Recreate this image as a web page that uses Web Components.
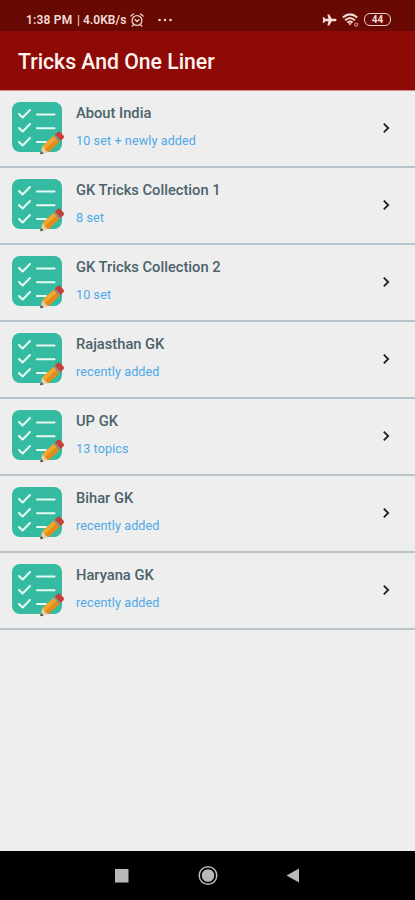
<!DOCTYPE html>
<html lang="en"><head><meta charset="utf-8"><title>Tricks And One Liner</title>
<style>html,body{margin:0;height:100%;background:#eee}body{font-family:Roboto,sans-serif;overflow:hidden}</style></head>
<body><phone-screen></phone-screen>
<script>
const define = (name, html) => {
  const t = document.createElement('template');
  t.innerHTML = html;
  customElements.define(name, class extends HTMLElement {
    constructor() { super(); this.attachShadow({mode: 'open'}).append(t.content.cloneNode(true)); }
  });
};
define('status-bar', `<style>
:host{display:flex;box-sizing:border-box;height:31px;padding:8px 24px 0 26px;align-items:center;background:#680903;color:#f3dcd6;font-size:12px;font-weight:600}
span{white-space:nowrap}.time{letter-spacing:.2px}.bar{margin:0 3px 0 2px;font-weight:400}.rate{letter-spacing:.05px}
svg{display:block;flex:none}.alarm{margin-left:3px}.dots{margin-left:13px}.plane{margin-left:auto}.wifi{margin-left:5px}
.time{width:49px}.rate{width:44px}
.battery{margin-left:5px;box-sizing:border-box;width:27px;height:13px;border:1.4px solid #f0d0c9;border-radius:6px;display:flex;align-items:center;justify-content:center;font-size:10px;font-weight:700;line-height:10px}
</style><span class="time">1:38 PM</span><span class="bar">|</span><span class="rate">4.0KB/s</span>
<svg class="alarm" width="14" height="14" viewBox="0 0 14 14" fill="none" stroke="#eed3cc" stroke-width="1.3" stroke-linecap="round"><circle cx="7" cy="7.5" r="4.9"/><path d="M.9 3 3.5 1M13.1 3 10.5 1M5 6.5 7 8.5 9 6.7M3.2 11.8 2.3 13M10.8 11.8 11.7 13"/></svg>
<svg class="dots" width="16" height="4" viewBox="0 0 16 4" fill="#eed3cc"><circle cx="2.5" cy="2" r="1.3"/><circle cx="8" cy="2" r="1.3"/><circle cx="13.5" cy="2" r="1.3"/></svg>
<svg class="plane" width="15" height="12" viewBox="0 0 15 12" fill="#f6ded7"><path d="M14.5 6c0-.9-.7-1.2-1.4-1.2H9.8L7.4.4H5.4L6.4 4.8H3.4L2 3.2H.6L1.2 6 .6 8.8H2L3.4 7.2h3L5.4 11.6h2L9.8 7.2h3.3c.7 0 1.4-.3 1.4-1.2z"/></svg>
<svg class="wifi" width="17" height="14" viewBox="0 0 17 14" fill="none" stroke="#f3d8d1" stroke-width="2"><path d="M.8 4.5Q8 -1.8 15.2 4.5M3.1 7.2Q8 2.8 12.9 7.2M5.4 9.6Q8 7.3 10.6 9.6"/><path d="M6.2 10.2h3.6L8 12.6z" fill="#f3d8d1" stroke="none"/><circle cx="14.2" cy="11.6" r="1.5" stroke="#b98078" stroke-width="1.4"/></svg>
<div class="battery">44</div>`);
define('app-bar', `<style>:host{display:flex;box-sizing:border-box;height:59px;padding:2px 18px 0;align-items:center;background:#8e0a06;color:#fff3ef;font-size:21.2px;font-weight:500;white-space:nowrap}</style><slot></slot>`);
define('checklist-icon', `<style>:host{display:block;width:54px;height:54px}svg{display:block}</style>
<svg width="54" height="54" viewBox="0 0 54 54"><rect x="0" width="50" height="50" rx="8" fill="#35bba1"/>
<g fill="none" stroke="#e5faf1" stroke-width="2.1" stroke-linecap="round" stroke-linejoin="round"><path d="m7 12 3.6 3.5 7.4-7.5M7 26l3.6 3.5L18 22M7 40l3.6 3.5L18 36M25 12.5h17.5M25 26.3h17.5M25 40h9"/></g>
<g transform="translate(28 52.3) rotate(-43) scale(.94 1)"><path d="M0 0 8-4.3V4.3z" fill="#ead0aa"/><path d="M0 0 3.5-1.9V1.9z" fill="#485355"/><path d="M8-4.3H24V0H7z" fill="#f8a52a"/><path d="M7 0H24V4.3H8z" fill="#e98916"/><path d="M24-4.3h2.5v8.6H24z" fill="#8f8f83"/><path d="M26-4.3h3.8q2 0 2 2v4.6q0 2-2 2h-3.8z" fill="#c83e38"/></g></svg>`);
define('topic-row', `<style>
:host{display:flex;box-sizing:border-box;height:77px;padding:11px 24px 0 12px;border-bottom:2px solid #b7c4cb;background:#eee}
.copy{display:flex;flex-direction:column;margin-left:10px;flex:1;white-space:nowrap}
.title{color:#4b626b;font-size:14.7px;font-weight:500;line-height:22px}.note{color:#4da9e7;font-size:12.6px;line-height:18px;margin-top:8px;letter-spacing:.1px}
.chevron{margin:20.4px 0 0;width:10px;height:12px}
</style><checklist-icon></checklist-icon><div class="copy"><div class="title"><slot name="title"></slot></div><div class="note"><slot></slot></div></div>
<svg class="chevron" viewBox="0 0 10 12" fill="none" stroke="#1d2022" stroke-width="1.8"><path d="m2.8 1.6 4.4 4.4-4.4 4.4"/></svg>`);
define('nav-bar', `<style>:host{display:flex;height:49px;align-items:center;justify-content:center;background:#000}svg{display:block}</style>
<svg width="415" height="49" viewBox="0 0 415 49" fill="#b9b9b9"><rect x="115" y="18" width="13.5" height="13.5"/><circle cx="208" cy="24.5" r="6.3"/><circle cx="208" cy="24.5" r="8.8" fill="none" stroke="#b9b9b9" stroke-width="1.5"/><path d="M286.5 24.5 299 17.5v14z"/></svg>`);
define('phone-screen', `<style>:host{display:flex;flex-direction:column;width:415px;height:900px;background:#eee}main{flex:1;border-top:1px solid #d08a8a}</style>
<status-bar></status-bar><app-bar>Tricks And One Liner</app-bar><main>
<topic-row><span slot="title">About India</span>10 set + newly added</topic-row>
<topic-row><span slot="title">GK Tricks Collection 1</span>8 set</topic-row>
<topic-row><span slot="title">GK Tricks Collection 2</span>10 set</topic-row>
<topic-row><span slot="title">Rajasthan GK</span>recently added</topic-row>
<topic-row><span slot="title">UP GK</span>13 topics</topic-row>
<topic-row><span slot="title">Bihar GK</span>recently added</topic-row>
<topic-row><span slot="title">Haryana GK</span>recently added</topic-row>
</main><nav-bar></nav-bar>`);
</script></body></html>
